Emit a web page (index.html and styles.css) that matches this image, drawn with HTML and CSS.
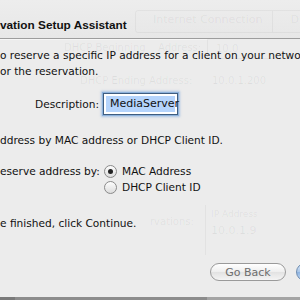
FILE: index.html
```html
<!DOCTYPE html>
<html lang="en">

<head>
    <meta charset="UTF-8">
    <title>DHCP Reservation Setup Assistant</title>
    <link rel="stylesheet" href="styles.css">
</head>

<body>
    <div class="sheet">
        <div class="titlebar">
            <h1>vation Setup Assistant</h1>
        </div>

        <div class="content">
            <p class="intro">o reserve a specific IP address for a client on your network<br>or the reservation.</p>

            <div class="form-row">
                <label class="label">Description:</label>
                <div class="textfield"><span class="selected">MediaServer</span></div>
            </div>

            <p class="note">ddress by MAC address or DHCP Client ID.</p>

            <div class="form-row radios-row">
                <span class="label">eserve address by:</span>
                <div class="radios">
                    <div class="radio-option"><span class="radio checked"></span>MAC Address</div>
                    <div class="radio-option"><span class="radio"></span>DHCP Client ID</div>
                </div>
            </div>

            <p class="finish">e finished, click Continue.</p>

            <div class="buttons">
                <button class="btn">Go Back</button>
                <button class="btn primary">Continue</button>
            </div>
        </div>

        <div class="bottom-bar"></div>

        <!-- faint window showing through the sheet -->
        <div class="ghost">
            <div class="ghost-tabs">
                <span class="ghost-tab">Internet Connection</span>
                <span class="ghost-tab">DHCP</span>
            </div>
            <span class="ghost-text g-begin">DHCP Beginning</span>
            <span class="ghost-text g-begin2">Address:</span>
            <span class="ghost-box g-begin-box">10.0</span>
            <span class="ghost-text g-end">DHCP Ending Address:</span>
            <span class="ghost-text g-end-val">10.0.1.200</span>
            <span class="ghost-text g-res">rvations:</span>
            <div class="ghost-table">
                <span class="ghost-head">IP Address</span>
                <span class="ghost-cell">10.0.1.9</span>
            </div>
        </div>
    </div>
</body>

</html>
```

FILE: styles.css
```css
body {
    margin: 0;
    padding: 0;
    font-family: "DejaVu Sans", "Liberation Sans", sans-serif;
    font-size: 10.6px;
    color: #111;
    background-color: #ececec;
}

.sheet {
    position: relative;
    width: 300px;
    height: 300px;
    overflow: hidden;
    background-color: #ececec;
}

/* ghost window showing through */
.ghost {
    position: absolute;
    top: 0;
    left: 0;
    width: 300px;
    height: 300px;
    color: rgba(0, 0, 0, 0.06);
    pointer-events: none;
}

.ghost-tabs {
    position: absolute;
    top: 10px;
    left: 135px;
    width: 200px;
    height: 21px;
    display: flex;
    border: 1px solid rgba(0, 0, 0, 0.04);
    border-radius: 3px;
}

.ghost-tab {
    padding: 0 10px 0 17px;
    line-height: 17px;
    font-size: 11px;
    border-right: 1px solid rgba(0, 0, 0, 0.04);
}

.ghost-text {
    position: absolute;
    font-size: 10px;
}

.g-begin {
    top: 42px;
    left: 64px;
}

.g-begin2 {
    top: 42px;
    left: 158px;
}

.ghost-box {
    position: absolute;
    top: 39px;
    left: 207px;
    width: 100px;
    height: 18px;
    padding-left: 8px;
    font-size: 10px;
    line-height: 18px;
    border: 1px solid rgba(0, 0, 0, 0.04);
}

.g-end {
    top: 75px;
    left: 80px;
}

.g-end-val {
    top: 75px;
    left: 212px;
}

.g-res {
    top: 216px;
    left: 150px;
}

.ghost-table {
    position: absolute;
    top: 205px;
    left: 205px;
    width: 110px;
    height: 42px;
    padding: 4px 5px;
    border-left: 1px solid rgba(0, 0, 0, 0.04);
    display: flex;
    flex-direction: column;
}

.ghost-head {
    font-size: 9px;
}

.ghost-cell {
    font-size: 11px;
    margin-top: 5px;
}

/* sheet proper */
.titlebar {
    height: 38px;
    border-bottom: 1px solid #9d9d9d;
    background: linear-gradient(#ededed, #e7e7e7);
}

.titlebar h1 {
    margin: 0;
    padding-top: 17px;
    font-family: "Liberation Sans", Arial, sans-serif;
    font-size: 11.8px;
    font-weight: bold;
    line-height: 16px;
    color: #111;
}

.content {
    border-top: 1px solid #f6f6f6;
}

.content p {
    margin: 0;
    line-height: 16px;
    white-space: nowrap;
}

.intro {
    padding-top: 7px;
}

.form-row {
    display: grid;
    grid-template-columns: 99px auto;
    column-gap: 4px;
    align-items: center;
    margin-top: 14px;
}

.label {
    text-align: right;
    white-space: nowrap;
}

.textfield {
    width: 69px;
    height: 16px;
    padding: 2px;
    background: #fff;
    border: 1px solid #3f5d80;
    box-shadow: 0 0 0 1px #8db2dc, 0 0 2px 2px rgba(110, 160, 220, 0.5);
}

.selected {
    display: block;
    height: 16px;
    line-height: 16px;
    padding-left: 4px;
    background-color: #b5d4fc;
    font-size: 11px;
}

.content .note {
    margin-top: 17px;
}

.radios-row {
    align-items: start;
    margin-top: 15px;
}

.radios-row .label {
    line-height: 16px;
}

.radio-option {
    display: flex;
    align-items: center;
    gap: 5px;
    height: 16px;
    margin-left: 1px;
}

.radio {
    width: 11px;
    height: 11px;
    border-radius: 50%;
    border: 1px solid #8a8a8a;
    background: linear-gradient(#fdfdfd, #dcdcdc);
    display: flex;
    align-items: center;
    justify-content: center;
}

.radio.checked::after {
    content: "";
    width: 5px;
    height: 5px;
    border-radius: 50%;
    background: #222;
}

.content .finish {
    margin-top: 20px;
}

.buttons {
    display: flex;
    gap: 10px;
    padding-left: 210px;
    margin-top: 32px;
}

.btn {
    flex: none;
    width: 76px;
    height: 18px;
    padding: 0;
    border: 1px solid #9a9a9a;
    border-radius: 9px;
    background: linear-gradient(#ffffff, #eeeeee 50%, #e2e2e2 51%, #f4f4f4);
    font-family: "DejaVu Sans", "Liberation Sans", sans-serif;
    font-size: 11px;
    color: #6e6e6e;
}

.btn.primary {
    border-color: #6f8db0;
    background: linear-gradient(#d8e6f6, #a9c6e8 50%, #8cb2e0 51%, #c4daf4);
    color: #111;
}

.bottom-bar {
    position: absolute;
    bottom: 0;
    left: 0;
    width: 300px;
    height: 3px;
    background: linear-gradient(90deg, #7a7a7a 0, #7a7a7a 15px, #8c8c8c 15px, #8c8c8c 207px, #a4a4a4 207px);
}
```
